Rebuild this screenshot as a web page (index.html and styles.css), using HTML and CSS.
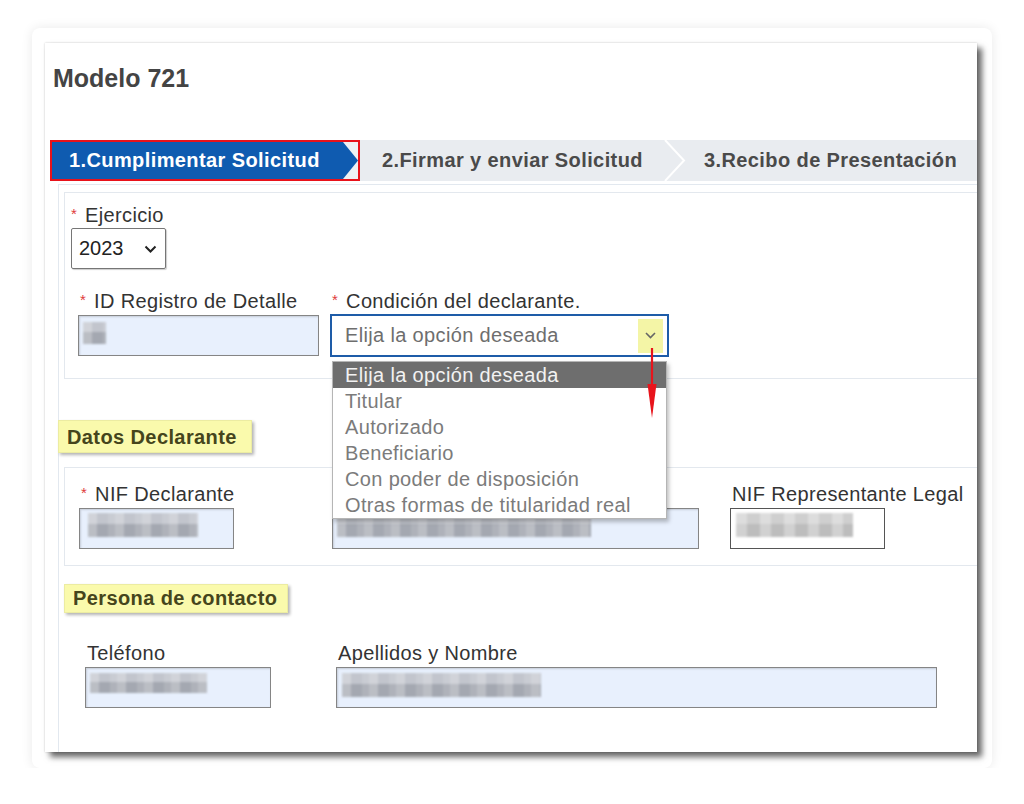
FILE: index.html
```html
<!DOCTYPE html>
<html lang="es">
<head>
    <meta charset="UTF-8">
    <meta name="viewport" content="width=device-width, initial-scale=1.0">
    <title>Modelo 721</title>
    <link rel="stylesheet" href="styles.css">
</head>
<body>
    <div class="card">
        <div class="frame">
            <h1 class="title">Modelo 721</h1>

            <div class="steps">
                <div class="step-active">
                    <div class="step-arrow">1.Cumplimentar Solicitud</div>
                </div>
                <div class="step step-2">2.Firmar y enviar Solicitud</div>
                <svg class="step-sep" viewBox="0 0 22 41">
                    <polyline points="1,0 20,20.5 1,41" fill="none" stroke="#fff" stroke-width="2"/>
                </svg>
                <div class="step step-3">3.Recibo de Presentación</div>
            </div>

            <div class="form-wrap">
                <!-- Ejercicio / condicion -->
                <div class="panel panel-top">
                    <label class="label label-first"><span class="req">*</span> Ejercicio</label>
                    <div class="select-year">
                        <span>2023</span>
                        <svg width="13" height="8" viewBox="0 0 13 8"><path d="M1.5 1.5 L6.5 6.5 L11.5 1.5" fill="none" stroke="#222" stroke-width="2"/></svg>
                    </div>

                    <div class="row">
                        <div class="field f-id">
                            <label class="label"><span class="req">*</span> ID Registro de Detalle</label>
                            <div class="input in-id"><div class="mosaic m-id"></div></div>
                        </div>
                        <div class="field">
                            <label class="label"><span class="req">*</span> Condición del declarante.</label>
                            <div class="select-cond">
                                <span>Elija la opción deseada</span>
                                <span class="select-btn">
                                    <svg width="11" height="7" viewBox="0 0 11 7"><path d="M1 1 L5.5 5.5 L10 1" fill="none" stroke="#666" stroke-width="1.6"/></svg>
                                </span>
                                <ul class="dropdown">
                                    <li class="selected">Elija la opción deseada</li>
                                    <li>Titular</li>
                                    <li>Autorizado</li>
                                    <li>Beneficiario</li>
                                    <li>Con poder de disposición</li>
                                    <li>Otras formas de titularidad real</li>
                                </ul>
                                <svg class="red-arrow" width="14" height="72" viewBox="0 0 14 72">
                                    <line x1="7" y1="0" x2="7" y2="40" stroke="#e8141c" stroke-width="2.2"/>
                                    <polygon points="2.5,36 11.5,36 7,70" fill="#e8141c"/>
                                </svg>
                            </div>
                        </div>
                    </div>
                </div>

                <div class="section-tag tag-decl">Datos Declarante</div>
                <div class="panel panel-decl">
                    <div class="row row-flat">
                        <div class="field f-nif">
                            <label class="label"><span class="req">*</span> NIF Declarante</label>
                            <div class="input in-nif"><div class="mosaic m-nif"></div></div>
                        </div>
                        <div class="field f-name">
                            <!-- label hidden behind the open list -->
                            <label class="label">&nbsp;</label>
                            <div class="input in-name"><div class="mosaic m-name"></div></div>
                        </div>
                        <div class="field">
                            <label class="label">NIF Representante Legal</label>
                            <div class="input input-white in-nif"><div class="mosaic mosaic-white m-rep"></div></div>
                        </div>
                    </div>
                </div>

                <div class="section-tag tag-contact">Persona de contacto</div>
                <div class="row row-contact">
                    <div class="field f-tel">
                        <label class="label">Teléfono</label>
                        <div class="input in-tel"><div class="mosaic m-tel"></div></div>
                    </div>
                    <div class="field">
                        <label class="label">Apellidos y Nombre</label>
                        <div class="input in-ape"><div class="mosaic m-ape"></div></div>
                    </div>
                </div>
            </div>
        </div>
    </div>
</body>
</html>
```

FILE: styles.css
```css
body {
    margin: 0;
    background-color: #fff;
    font-family: "Liberation Sans", Arial, sans-serif;
    color: #333;
}

.card {
    width: 960px;
    height: 740px;
    margin: 28px 0 0 32px;
    padding: 15px 15px 16px 13px;
    box-sizing: border-box;
    background-color: #fff;
    border-radius: 8px;
    box-shadow: 0 0 12px rgba(0,0,0,0.09);
}

.frame {
    height: 100%;
    padding-top: 20px;
    box-sizing: border-box;
    background-color: #fff;
    overflow: hidden;
    box-shadow: 5px 5px 6px rgba(0,0,0,0.6), 0 0 2px rgba(0,0,0,0.2);
}

.title {
    margin: 0 0 47px 8px;
    font-size: 25px;
    line-height: 30px;
    font-weight: bold;
    color: #444;
}

/* step tabs */
.steps {
    display: flex;
    height: 41px;
    margin-left: 5px;
    background-color: #e9ecf0;
}

.step-active {
    width: 310px;
    flex-shrink: 0;
    box-sizing: border-box;
    border: 2px solid #e8121a;
    background-color: #eef1f4;
}

.step-arrow {
    height: 100%;
    display: flex;
    align-items: center;
    padding-left: 17px;
    background-color: #0f5bb0;
    clip-path: polygon(0 0, 291px 0, 100% 50%, 291px 100%, 0 100%);
    color: #fff;
    font-size: 20px;
    font-weight: bold;
    letter-spacing: 0.4px;
    white-space: nowrap;
}

.step {
    display: flex;
    align-items: center;
    flex-shrink: 0;
    font-size: 20px;
    font-weight: bold;
    letter-spacing: 0.4px;
    color: #4a4a4a;
    white-space: nowrap;
}

.step-2 {
    width: 304px;
    padding-left: 22px;
    box-sizing: border-box;
}

.step-sep {
    width: 22px;
    height: 41px;
    flex-shrink: 0;
}

.step-3 {
    padding-left: 18px;
}

/* form */
.form-wrap {
    width: 940px;
    height: 600px;
    margin: 3px 0 0 13px;
    padding: 7px 0 0 5px;
    border-top: 1px solid #e2e8ef;
    border-left: 1px solid #e2e8ef;
}

.panel {
    border: 1px solid #e3e8ee;
    border-right: none;
}

.panel-top {
    padding: 10px 0 21px 6px;
}

.label {
    display: block;
    height: 24px;
    padding-left: 2px;
    font-size: 20px;
    line-height: 24px;
    letter-spacing: 0.35px;
    color: #333;
    white-space: nowrap;
}

.label-first {
    padding-left: 0;
}

.req {
    color: #e03a3a;
    font-size: 15px;
    line-height: 0;
    vertical-align: 3px;
    margin-right: 2px;
}

.select-year {
    width: 95px;
    height: 41px;
    margin-top: 1px;
    padding: 0 8px 0 7px;
    box-sizing: border-box;
    display: flex;
    align-items: center;
    justify-content: space-between;
    border: 1px solid #767676;
    border-radius: 2px;
    box-shadow: 1px 1px 1px rgba(0,0,0,0.2);
    font-size: 20px;
    color: #222;
}

.row {
    display: flex;
    align-items: flex-start;
    margin: 20px 0 0 7px;
}

.row-flat {
    margin: 0;
}

.row-contact {
    margin: 28px 0 0 21px;
}

.f-id { width: 252px; }
.f-nif { width: 253px; }
.f-name { width: 398px; }
.f-tel { width: 251px; }

.input {
    height: 41px;
    margin-top: 2px;
    box-sizing: border-box;
    border: 1px solid #858585;
    background-color: #e8f0fd;
    box-shadow: inset 1px 1px 2px rgba(0,0,0,0.15);
    overflow: hidden;
}

.input-white {
    background-color: #fff;
    border-color: #555;
    box-shadow: none;
}

.in-id { width: 241px; }
.in-nif { width: 155px; }
.in-name { width: 367px; }
.in-tel { width: 186px; }
.in-ape { width: 601px; }

.mosaic {
    height: 24px;
    margin: 4px 0 0 5px;
    filter: blur(1.3px);
    background:
        repeating-linear-gradient(90deg, rgba(255,255,255,0.25) 0 9px, rgba(0,0,0,0) 9px 20px, rgba(255,255,255,0.12) 20px 27px),
        linear-gradient(#c2c5cd 0 45%, #a4a8b1 45% 100%);
}

.mosaic-white {
    background:
        repeating-linear-gradient(90deg, rgba(255,255,255,0.3) 0 11px, rgba(0,0,0,0) 11px 24px),
        linear-gradient(#cfcfcf 0 45%, #bdbdbd 45% 100%);
}

.m-id { width: 23px; height: 22px; margin: 6px 0 0 4px; }
.m-nif { width: 110px; margin-left: 8px; }
.m-name { width: 254px; margin-left: 4px; }
.m-rep { width: 117px; margin-left: 5px; }
.m-tel { width: 117px; height: 20px; margin: 5px 0 0 4px; }
.m-ape { width: 199px; margin: 5px 0 0 5px; }

/* condicion select with open list */
.select-cond {
    position: relative;
    width: 339px;
    height: 43px;
    margin-top: 1px;
    padding-left: 13px;
    box-sizing: border-box;
    display: flex;
    align-items: center;
    justify-content: space-between;
    border: 2px solid #1e5ca8;
    background-color: #fff;
    font-size: 20px;
    letter-spacing: 0.35px;
    color: #6e6e6e;
}

.select-btn {
    width: 25px;
    height: 34px;
    margin-right: 4px;
    display: flex;
    justify-content: center;
    align-items: center;
    background-color: #f4f5a6;
}

.dropdown {
    position: absolute;
    left: 0;
    top: 45px;
    width: 335px;
    margin: 0;
    padding: 0;
    list-style: none;
    box-sizing: border-box;
    border: 1px solid #b5b5b5;
    background-color: #fff;
    box-shadow: 2px 3px 4px rgba(0,0,0,0.25);
    z-index: 5;
}

.dropdown li {
    height: 26px;
    line-height: 26px;
    padding-left: 12px;
    color: #7b7b7b;
    white-space: nowrap;
}

.dropdown .selected {
    background-color: #6e6e6e;
    color: #f2f2f2;
}

.red-arrow {
    position: absolute;
    left: 313px;
    top: 32px;
    z-index: 6;
}

/* section labels */
.section-tag {
    height: 33px;
    padding: 2px 0 0 8px;
    box-sizing: border-box;
    background-color: #fafaac;
    border: 1px solid #ececa2;
    box-shadow: 2px 2px 3px rgba(0,0,0,0.3);
    font-size: 20px;
    line-height: 29px;
    font-weight: bold;
    letter-spacing: 0.4px;
    color: #45451c;
    white-space: nowrap;
}

.tag-decl {
    width: 194px;
    margin: 41px 0 0 -6px;
}

.panel-decl {
    margin-top: 14px;
    padding: 14px 0 16px 14px;
}

.tag-contact {
    width: 224px;
    height: 29px;
    margin-top: 18px;
    padding-top: 0;
    line-height: 27px;
}
```
